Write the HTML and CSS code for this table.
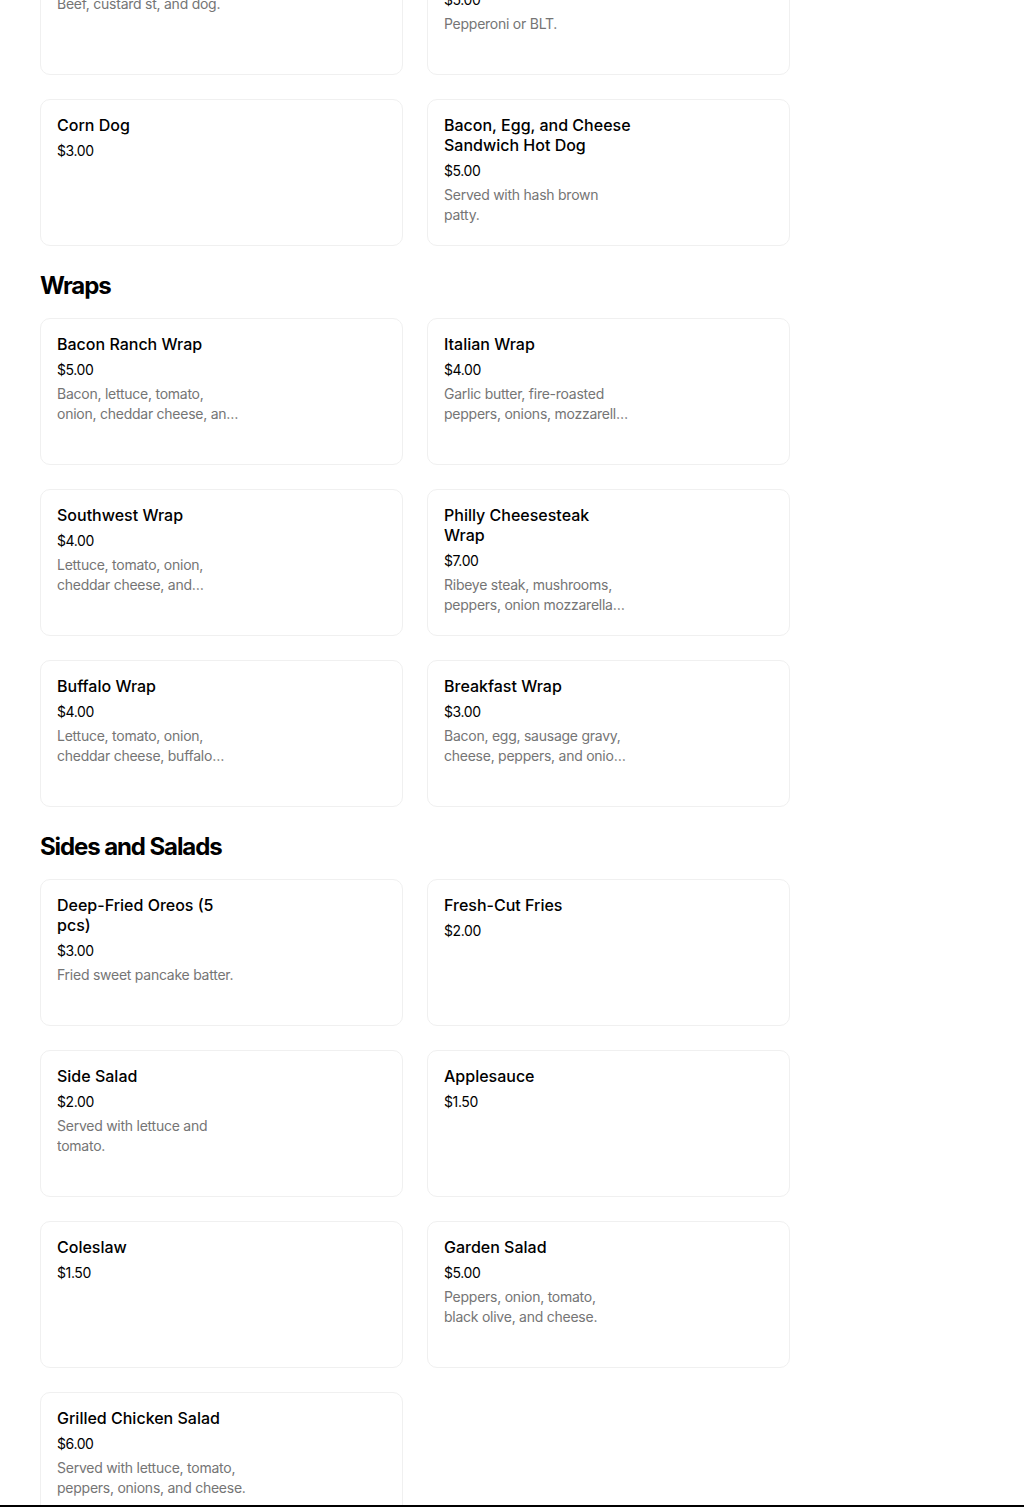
FILE: index.html
```
<!DOCTYPE html>
<html>
<head lang="en">
<meta charset="UTF-8">
<title>Menu</title>
<link rel="stylesheet" href="styles.css">
</head>
<body>
<div class="menu">

<div class="section section-first">
<div class="cards">
  <div class="card">
    <div class="info">
      <p class="name">Coney Dog</p>
      <p class="price">$3.00</p>
      <p class="desc">Beef, custard st, and dog.</p>
    </div>
  </div>
  <div class="card">
    <div class="info">
      <p class="name">Pizza Dog or BLT Dog Special</p>
      <p class="price">$5.00</p>
      <p class="desc">Pepperoni or BLT.</p>
    </div>
  </div>
  <div class="card">
    <div class="info">
      <p class="name">Corn Dog</p>
      <p class="price">$3.00</p>
    </div>
  </div>
  <div class="card">
    <div class="info">
      <p class="name">Bacon, Egg, and Cheese Sandwich Hot Dog</p>
      <p class="price">$5.00</p>
      <p class="desc">Served with hash brown patty.</p>
    </div>
  </div>
</div>
</div>

<div class="section">
<h2>Wraps</h2>
<div class="cards">
  <div class="card">
    <div class="info">
      <p class="name">Bacon Ranch Wrap</p>
      <p class="price">$5.00</p>
      <p class="desc">Bacon, lettuce, tomato, onion, cheddar cheese, and ranch dressing.</p>
    </div>
  </div>
  <div class="card">
    <div class="info">
      <p class="name">Italian Wrap</p>
      <p class="price">$4.00</p>
      <p class="desc">Garlic butter, fire-roasted peppers, onions, mozzarella cheese, and salami.</p>
    </div>
  </div>
  <div class="card">
    <div class="info">
      <p class="name">Southwest Wrap</p>
      <p class="price">$4.00</p>
      <p class="desc">Lettuce, tomato, onion, cheddar cheese, and southwest sauce.</p>
    </div>
  </div>
  <div class="card">
    <div class="info">
      <p class="name">Philly Cheesesteak Wrap</p>
      <p class="price">$7.00</p>
      <p class="desc">Ribeye steak, mushrooms, peppers, onion mozzarella cheese.</p>
    </div>
  </div>
  <div class="card">
    <div class="info">
      <p class="name">Buffalo Wrap</p>
      <p class="price">$4.00</p>
      <p class="desc">Lettuce, tomato, onion, cheddar cheese, buffalo chicken, and ranch.</p>
    </div>
  </div>
  <div class="card">
    <div class="info">
      <p class="name">Breakfast Wrap</p>
      <p class="price">$3.00</p>
      <p class="desc">Bacon, egg, sausage gravy, cheese, peppers, and onions in a tortilla.</p>
    </div>
  </div>
</div>
</div>

<div class="section">
<h2>Sides and Salads</h2>
<div class="cards">
  <div class="card">
    <div class="info">
      <p class="name">Deep-Fried Oreos (5 pcs)</p>
      <p class="price">$3.00</p>
      <p class="desc">Fried sweet pancake batter.</p>
    </div>
  </div>
  <div class="card">
    <div class="info">
      <p class="name">Fresh-Cut Fries</p>
      <p class="price">$2.00</p>
    </div>
  </div>
  <div class="card">
    <div class="info">
      <p class="name">Side Salad</p>
      <p class="price">$2.00</p>
      <p class="desc">Served with lettuce and tomato.</p>
    </div>
  </div>
  <div class="card">
    <div class="info">
      <p class="name">Applesauce</p>
      <p class="price">$1.50</p>
    </div>
  </div>
  <div class="card">
    <div class="info">
      <p class="name">Coleslaw</p>
      <p class="price">$1.50</p>
    </div>
  </div>
  <div class="card">
    <div class="info">
      <p class="name">Garden Salad</p>
      <p class="price">$5.00</p>
      <p class="desc">Peppers, onion, tomato, black olive, and cheese.</p>
    </div>
  </div>
  <div class="card">
    <div class="info">
      <p class="name">Grilled Chicken Salad</p>
      <p class="price">$6.00</p>
      <p class="desc">Served with lettuce, tomato, peppers, onions, and cheese.</p>
    </div>
  </div>
</div>
</div>

</div>
<div class="edge"></div>
</body>
</html>
```

FILE: styles.css
```
body {
  margin: 0;
  background-color: #fff;
  font-family: Inter, Roboto, sans-serif;
  color: #000;
}

.menu {
  width: 750px;
  padding-left: 40px;
  margin-top: -72px;
}

.section {
  margin-top: 24px;
}

.section-first {
  margin-top: 0;
}

.section h2 {
  font-size: 24px;
  font-weight: 700;
  letter-spacing: -1.1px;
  line-height: 32px;
  margin: 0 0 16px 0;
}

.cards {
  display: grid;
  grid-template-columns: 363px 363px;
  gap: 24px;
}

.card {
  height: 147px;
  box-sizing: border-box;
  border: 1px solid #f0f0f0;
  border-radius: 10px;
  padding: 15px 16px 16px 16px;
}

.info {
  width: 189px;
}

.card p {
  margin: 0;
}

.name {
  font-size: 16px;
  font-weight: 500;
  line-height: 20px;
}

.price {
  font-size: 14px;
  line-height: 20px;
  letter-spacing: -0.4px;
  margin-top: 6px !important;
}

.desc {
  font-size: 14px;
  line-height: 20px;
  letter-spacing: -0.25px;
  color: #757575;
  margin-top: 4px !important;
  display: -webkit-box;
  -webkit-line-clamp: 2;
  -webkit-box-orient: vertical;
  overflow: hidden;
}

.edge {
  position: fixed;
  left: 0;
  right: 0;
  bottom: 0;
  height: 2px;
  background-color: #000;
}
```
